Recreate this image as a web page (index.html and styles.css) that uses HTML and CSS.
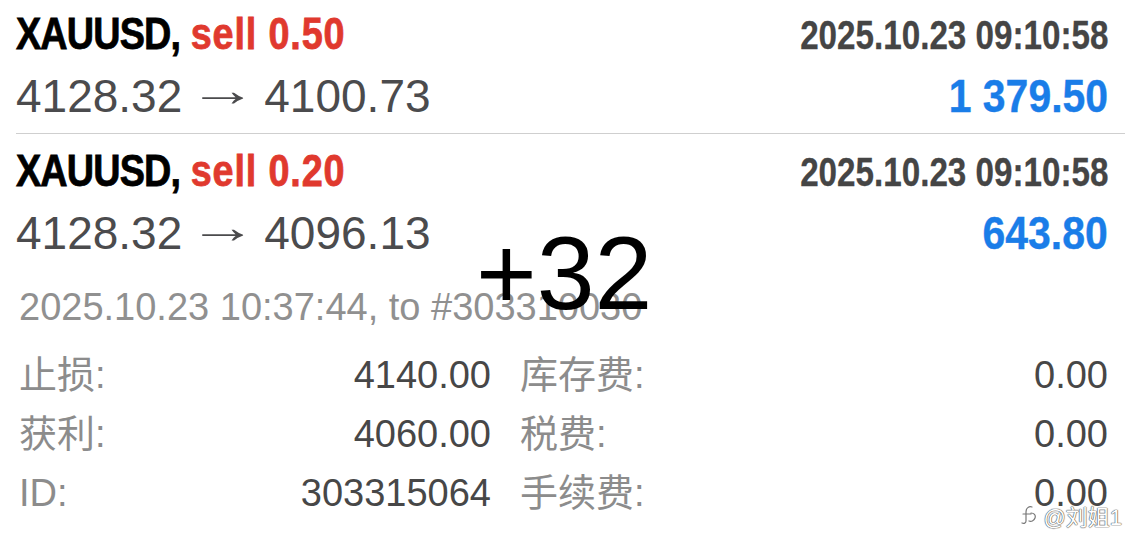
FILE: index.html
```html
<!DOCTYPE html>
<html lang="zh">
<head>
  <meta charset="UTF-8">
  <meta name="viewport" content="width=device-width, initial-scale=1">
  <title>XAUUSD</title>
  <link rel="stylesheet" href="styles.css">
</head>
<body>

  <div class="screen">

    <!-- Closed orders -->
    <div class="trade first">
      <div class="row">
        <div class="title"><span class="symbol">XAUUSD,</span> <span class="side">sell 0.50</span></div>
        <div class="time">2025.10.23 09:10:58</div>
      </div>
      <div class="row">
        <div class="prices">4128.32<span class="arrow">→</span>4100.73</div>
        <div class="profit">1 379.50</div>
      </div>
    </div>

    <div class="trade">
      <div class="row">
        <div class="title"><span class="symbol">XAUUSD,</span> <span class="side">sell 0.20</span></div>
        <div class="time">2025.10.23 09:10:58</div>
      </div>
      <div class="row">
        <div class="prices">4128.32<span class="arrow">→</span>4096.13</div>
        <div class="profit">643.80</div>
      </div>
    </div>

    <!-- Order details -->
    <div class="details">
      <div class="comment">2025.10.23 10:37:44, to #303310030</div>
      <div class="grid">
        <div class="cell"><span class="label">止损:</span><span class="value">4140.00</span></div>
        <div class="cell"><span class="label">库存费:</span><span class="value">0.00</span></div>
        <div class="cell"><span class="label">获利:</span><span class="value">4060.00</span></div>
        <div class="cell"><span class="label">税费:</span><span class="value">0.00</span></div>
        <div class="cell"><span class="label">ID:</span><span class="value">303315064</span></div>
        <div class="cell"><span class="label">手续费:</span><span class="value">0.00</span></div>
      </div>
    </div>

    <div class="caption">+32</div>

    <div class="watermark">
      <svg width="20" height="22" viewBox="0 0 20 22">
        <path d="M13 3c-3-1-6 1-6 5v9c0 2-2 3-4 2M4 10h8M12 9c3 0 5 2 4 5-1 3-4 4-6 3" fill="none" stroke="#fff" stroke-width="3" stroke-linecap="round"/>
        <path d="M13 3c-3-1-6 1-6 5v9c0 2-2 3-4 2M4 10h8M12 9c3 0 5 2 4 5-1 3-4 4-6 3" fill="none" stroke="#777" stroke-width="1.2" stroke-linecap="round"/>
      </svg>
      <span>@刘姐1</span>
    </div>

  </div>

</body>
</html>
```

FILE: styles.css
```css
body {
  margin: 0;
  background: #fff;
  font-family: "Liberation Sans", Arial, "Noto Sans CJK SC", sans-serif;
}

.screen {
  position: relative;
  width: 1125px;
  height: 551px;
  overflow: hidden;
}

/* Trade rows */
.trade {
  margin-left: 16px;
  padding: 5px 17px 0 0;
}

.trade.first {
  padding-top: 2px;
  padding-bottom: 5px;
  border-bottom: 1px solid #cfcfcf;
}

.row {
  display: flex;
  justify-content: space-between;
  align-items: baseline;
  height: 63px;
  line-height: 63px;
}

/* condensed bold, squeezed by hand since no narrow face is installed */
.title,
.time,
.profit {
  font-weight: bold;
  white-space: nowrap;
}

.title {
  font-size: 45px;
  -webkit-text-stroke: 0.8px;
  transform: scaleX(0.84);
  transform-origin: left center;
}

.symbol {
  color: #000;
  letter-spacing: -1px;
}

.side {
  color: #e0392e;
  letter-spacing: 1px;
}

.time {
  font-size: 40px;
  color: #454545;
  -webkit-text-stroke: 0.3px;
  transform: scaleX(0.83);
  transform-origin: right center;
}

.prices {
  font-size: 46px;
  color: #4b4b4d;
}

.arrow {
  display: inline-block;
  width: 82px;
  text-align: center;
  transform: translateY(-6px) scaleX(1.5);
}

.profit {
  font-size: 46px;
  color: #1a7de8;
  -webkit-text-stroke: 0.4px;
  transform: scaleX(0.89);
  transform-origin: right center;
}

/* Details */
.details {
  padding: 12px 17px 0 19px;
  font-size: 38px;
}

.comment {
  line-height: 60px;
  color: #909090;
}

.grid {
  display: grid;
  grid-template-columns: 472px 1fr;
  column-gap: 29px;
  margin-top: 9px;
}

.cell {
  display: flex;
  justify-content: space-between;
  line-height: 59px;
}

.label {
  color: #8c8c8c;
}

.value {
  color: #474747;
}

/* Overlay caption from the video */
.caption {
  position: absolute;
  left: 476px;
  top: 213px;
  font-size: 104px;
  line-height: 120px;
  color: #000;
}

.watermark {
  position: absolute;
  right: 3px;
  top: 499px;
  display: flex;
  align-items: center;
  gap: 4px;
  font-size: 22px;
  color: #fff;
  text-shadow: 0 0 1px #555, 0 0 1px #555, 0 0 1px #555;
}
```
